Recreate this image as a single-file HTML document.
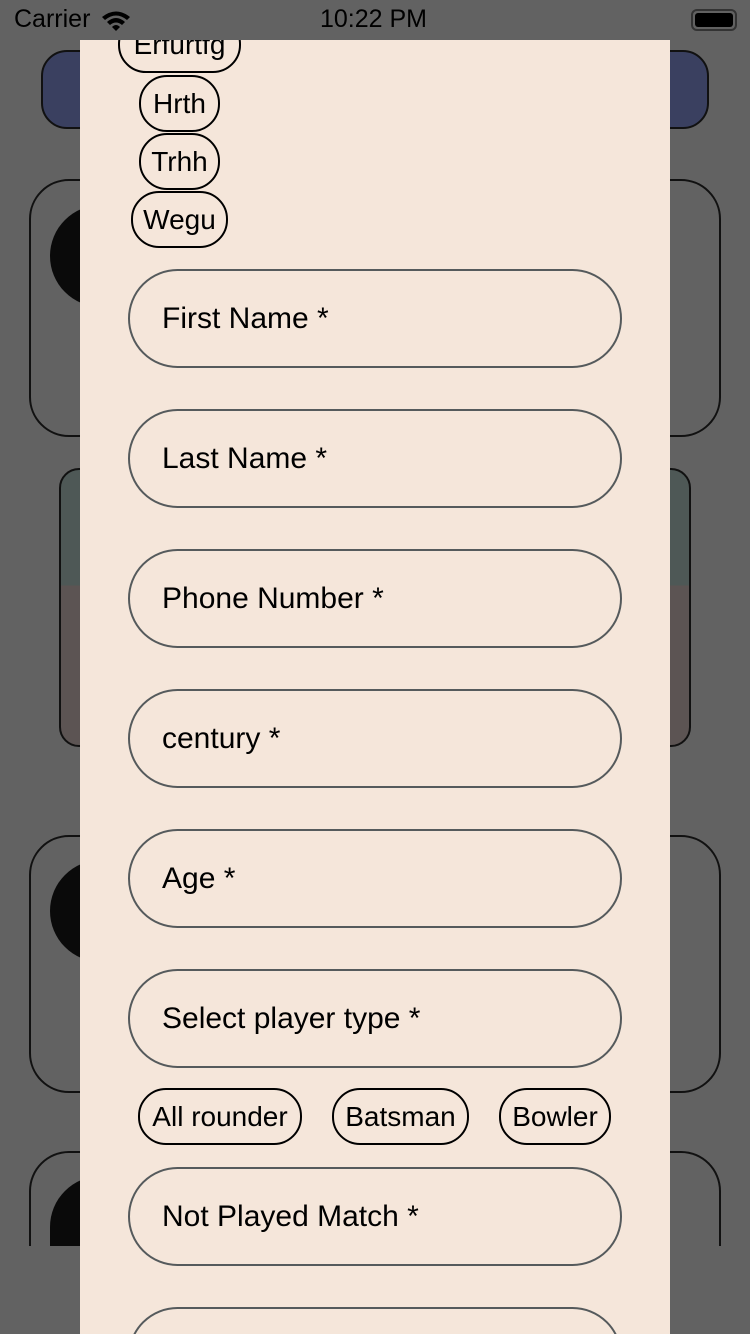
<!DOCTYPE html>
<html style="overflow:hidden"><head><meta charset="utf-8"><style>
*{margin:0;padding:0;box-sizing:border-box}
html,body{width:750px;height:1334px;overflow:hidden}
body{background:#626262;position:relative;font-family:"Liberation Sans",sans-serif}
.a{position:absolute}
.card{position:absolute;border:2px solid #111;border-radius:40px}
.circ{position:absolute;width:102px;height:102px;border-radius:50%;background:#0a0a0a}
.modal{position:absolute;left:80px;top:40px;width:590px;height:1294px;background:#f5e6da;overflow:hidden}
.inp{position:absolute;left:48px;width:494px;height:99px;border:2px solid #555a5c;border-radius:50px;font-size:30px;padding-left:32px;line-height:95px;color:#000}
.chip{position:absolute;height:57px;border:2px solid #000;border-radius:28px;font-size:28px;line-height:53px;text-align:center;color:#000;white-space:nowrap}
</style></head><body>
<div class="a" style="left:14px;top:5px;font-size:25px;color:#000">Carrier</div>
<svg class="a" style="left:100px;top:9px" width="32" height="22" viewBox="0 0 32 22"><path d="M2 8 Q16 -3 30 8 L27 11 Q16 2 5 11Z M7 13 Q16 5 25 13 L22 16 Q16 11 10 16Z M12 18 Q16 14 20 18 L16 22Z" fill="#000"/></svg>
<div class="a" style="left:320px;top:5px;font-size:25px;color:#000">10:22 PM</div>
<div class="a" style="left:691px;top:9px;width:46px;height:22px;border:2px solid #333;border-radius:6px;padding:2px"><div style="width:38px;height:14px;background:#000;border-radius:3px"></div></div>
<div class="a" style="left:41px;top:50px;width:668px;height:79px;background:#3a4060;border:2px solid #111;border-radius:26px"></div>
<div class="card" style="left:29px;top:179px;width:692px;height:258px"></div>
<div class="circ" style="left:50px;top:205px"></div>
<div class="card" style="left:59px;top:468px;width:632px;height:279px;background:linear-gradient(#4e5856 0,#4e5856 42%,#5c5453 42%);border-radius:20px"></div>
<div class="card" style="left:29px;top:835px;width:692px;height:258px"></div>
<div class="circ" style="left:50px;top:860px"></div>
<div class="card" style="left:29px;top:1151px;width:692px;height:95px;border-bottom:none;border-bottom-left-radius:0;border-bottom-right-radius:0"></div>
<div class="circ" style="left:50px;top:1176px;height:70px;border-radius:51px 51px 0 0"></div>
<div class="modal">
<div class="chip" style="left:38px;top:-24px;width:123px">Erfurtfg</div>
<div class="chip" style="left:59px;top:35px;width:81px">Hrth</div>
<div class="chip" style="left:59px;top:93px;width:81px">Trhh</div>
<div class="chip" style="left:51px;top:151px;width:97px">Wegu</div>
<div class="inp" style="top:229px">First Name *</div>
<div class="inp" style="top:369px">Last Name *</div>
<div class="inp" style="top:509px">Phone Number *</div>
<div class="inp" style="top:649px">century *</div>
<div class="inp" style="top:789px">Age *</div>
<div class="inp" style="top:929px">Select player type *</div>
<div class="chip" style="left:58px;top:1048px;width:164px">All rounder</div>
<div class="chip" style="left:252px;top:1048px;width:137px">Batsman</div>
<div class="chip" style="left:419px;top:1048px;width:112px">Bowler</div>
<div class="inp" style="top:1127px">Not Played Match *</div>
<div class="inp" style="top:1267px"></div>
</div>
</body></html>
